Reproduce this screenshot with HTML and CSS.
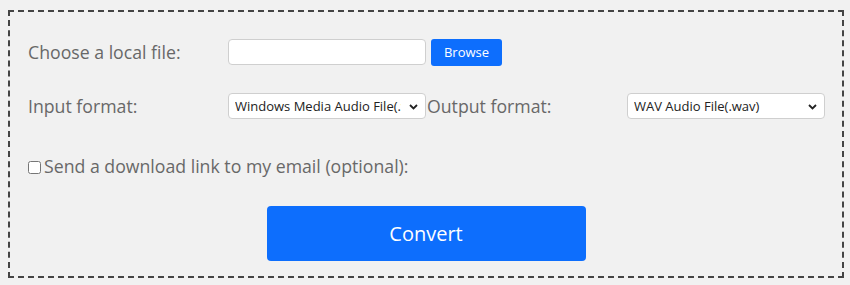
FILE: index.html
```html
<!DOCTYPE html>
<html lang="en">
<head>
    <meta charset="UTF-8">
    <meta name="viewport" content="width=device-width, initial-scale=1.0">
    <title>Audio Converter</title>
    <link rel="stylesheet" href="styles.css">
</head>
<body>
    <form class="converter" onsubmit="return false;">
        <div class="row">
            <label class="label" for="file_name">Choose a local file:</label>
            <div class="field">
                <input type="text" id="file_name" class="file-box">
                <button type="button" class="browse">Browse</button>
            </div>
        </div>

        <div class="row">
            <label class="label" for="input_format">Input format:</label>
            <div class="field select-wrap">
                <select id="input_format" class="format">
                    <option>Windows Media Audio File(.wma)</option>
                </select>
                <svg class="chevron" width="9" height="6" viewBox="0 0 9 6"><path d="M1 1l3.5 3.5L8 1" fill="none" stroke="#222" stroke-width="1.8"/></svg>
            </div>
            <label class="label" for="output_format">Output format:</label>
            <div class="field select-wrap">
                <select id="output_format" class="format">
                    <option>WAV Audio File(.wav)</option>
                </select>
                <svg class="chevron" width="9" height="6" viewBox="0 0 9 6"><path d="M1 1l3.5 3.5L8 1" fill="none" stroke="#222" stroke-width="1.8"/></svg>
            </div>
        </div>

        <div class="row check-row">
            <input type="checkbox" id="send_email" class="check">
            <label class="label" for="send_email">Send a download link to my email (optional):</label>
        </div>

        <div class="actions">
            <button type="submit" class="convert">Convert</button>
        </div>
    </form>
</body>
</html>
```

FILE: styles.css
```css
body {
    margin: 0;
    padding: 10px 6px 7px 8px;
    background: #f1f1f1;
    font-family: "Open Sans", Arial, sans-serif;
}
.converter {
    border: 2px dashed #444;
    padding: 13px 18px 15px 18px;
}
.row {
    display: flex;
    align-items: center;
    height: 54px;
}
.label {
    width: 200px;
    flex: none;
    font-size: 17.7px;
    color: #686868;
}
.field {
    width: 199px;
    flex: none;
    display: flex;
    align-items: center;
}
.file-box {
    width: 198px;
    height: 26px;
    box-sizing: border-box;
    border: 1px solid #cfcfcf;
    border-radius: 4px;
    background: #fff;
    flex: none;
}
.browse {
    margin-left: 5px;
    height: 27px;
    width: 71px;
    flex: none;
    background: #0d6efd;
    color: #fff;
    border: none;
    border-radius: 3px;
    font-family: "Open Sans", Arial, sans-serif;
    font-size: 13px;
    font-weight: 500;
    cursor: pointer;
}
.select-wrap {
    position: relative;
}
.format {
    -webkit-appearance: none;
    appearance: none;
    width: 198px;
    height: 26px;
    box-sizing: border-box;
    border: 1px solid #cfcfcf;
    border-radius: 4px;
    background: #fff;
    color: #222;
    font-family: "Open Sans", Arial, sans-serif;
    font-size: 13px;
    padding: 0 24px 0 6px;
}
.chevron {
    position: absolute;
    left: 181px;
    top: 11px;
    pointer-events: none;
}
.check-row {
    height: 66px;
}
.check {
    width: 13px;
    height: 13px;
    margin: 2px 3px 0 0;
}
.check-row .label {
    width: auto;
}
.actions {
    display: flex;
    justify-content: center;
    margin-top: 7px;
}
.convert {
    width: 319px;
    height: 55px;
    background: #0d6efd;
    color: #fff;
    border: none;
    border-radius: 4px;
    font-family: "Open Sans", Arial, sans-serif;
    font-size: 20px;
    cursor: pointer;
}
```
